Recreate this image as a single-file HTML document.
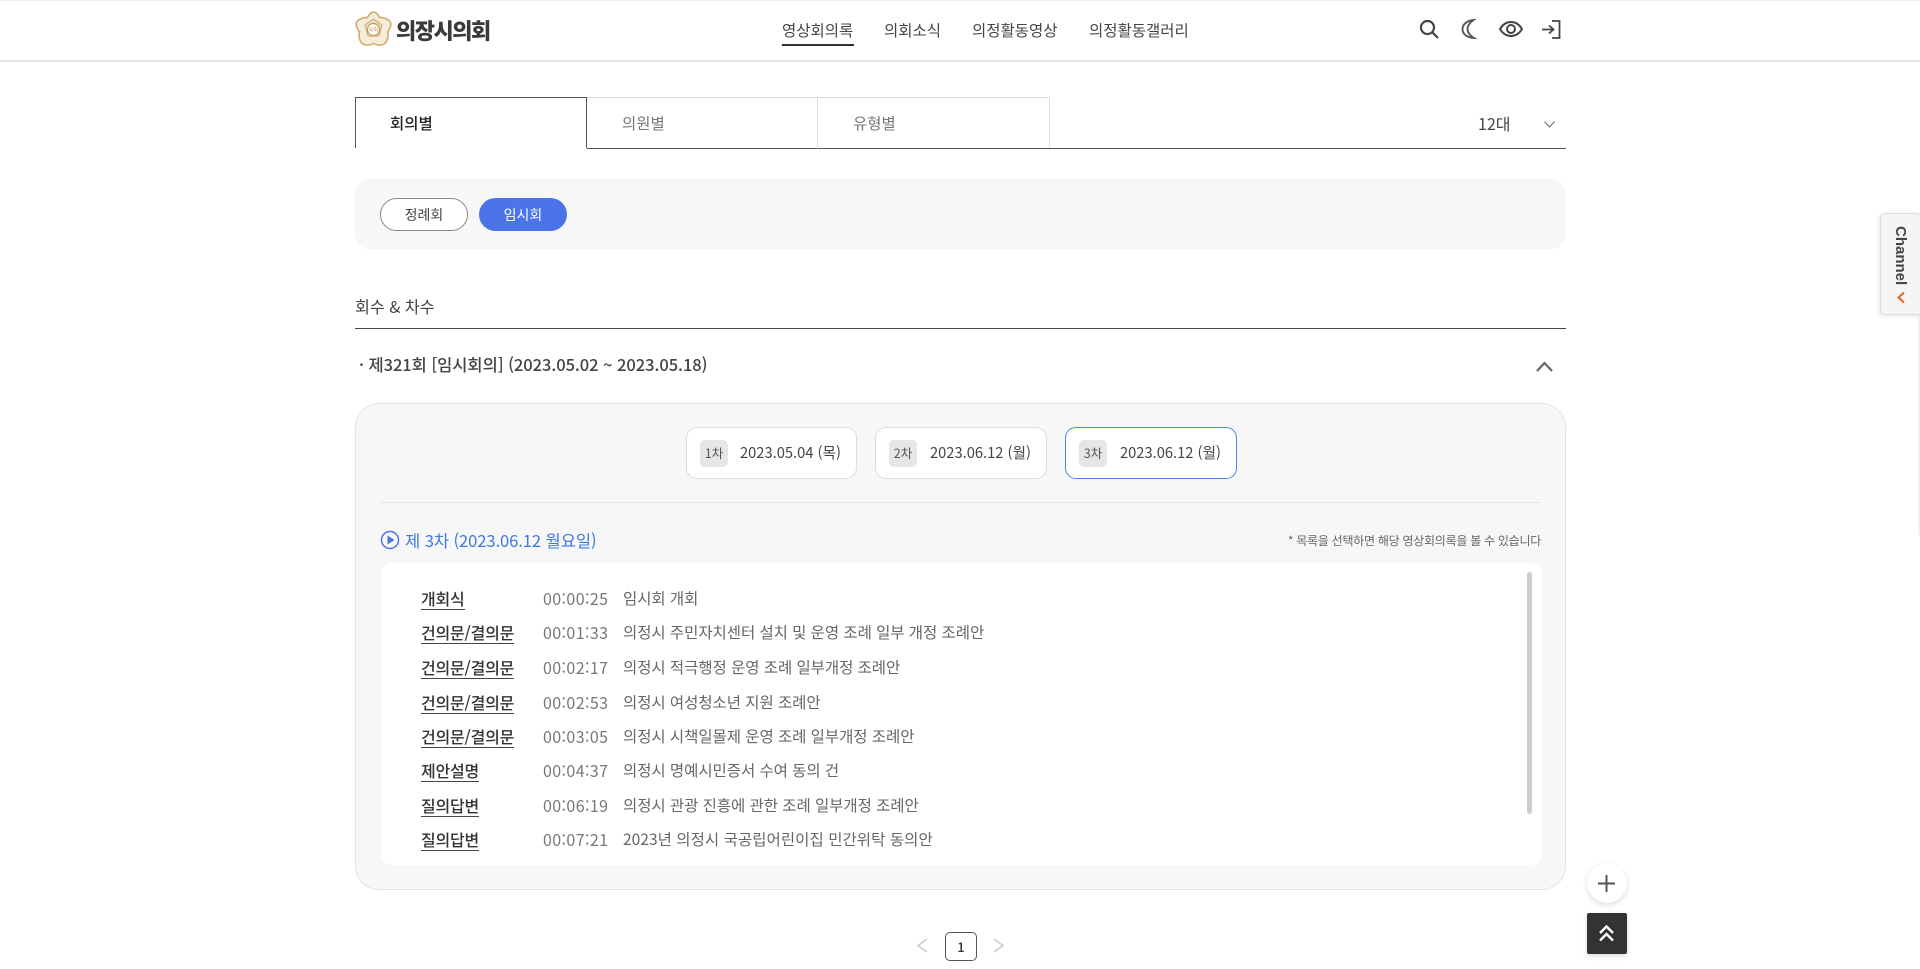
<!DOCTYPE html>
<html lang="ko"><head><meta charset="utf-8"><title>의장시의회</title>
<style>
html,body{margin:0;padding:0;background:#fff;width:1920px;height:969px;overflow:hidden}
body{position:relative;font-family:"Noto Sans CJK KR","Liberation Sans",sans-serif;color:#333}
.a{position:absolute;white-space:nowrap;box-sizing:border-box}
.t{line-height:20px;height:20px}
.nav{font-size:15.5px;top:20px;color:#444;letter-spacing:0}
.tab{top:97px;height:52px;border:1px solid #ddd;border-bottom:1px solid #555;border-left:0;background:#fff;font-size:15.5px;line-height:50px;padding-left:35px;color:#777}
.pill{top:198px;width:88px;height:33px;border-radius:17px;text-align:center;font-size:14px;line-height:33px}
.day{top:427px;height:52px;border:1px solid #ddd;border-radius:11px;background:#fff;font-size:14.7px;line-height:49px;color:#444}
.day b{position:absolute;left:13px;top:12px;width:28px;height:27px;background:#e6e6e6;border-radius:5px;font-weight:400;font-size:12.5px;line-height:25px;text-align:center;color:#555}
.day span{position:absolute;left:53px;top:0}
.lb{left:421px;font-size:16px;font-weight:500;color:#333;line-height:20px;height:22px;border-bottom:1px solid #444;letter-spacing:-.2px}
.tm{left:543px;font-size:16px;color:#777;line-height:20px;letter-spacing:.4px}
.tx{left:623px;font-size:15.5px;color:#666;line-height:20px;letter-spacing:-.05px}
svg{position:absolute;overflow:visible}
</style></head><body>
<div class="a" style="left:0;top:0;width:1920px;height:1px;background:#eee"></div>
<div class="a" style="left:0;top:60px;width:1920px;height:2px;background:#e2e2e2"></div>

<svg style="left:355px;top:11px" width="37" height="37" viewBox="0 0 37 37">
<path d="M18.500 1C21 1 23.500 4 24.500 6.500C27.500 6 34 8 35.500 11.500C37 15 34 19 32.500 21C34 24 32.500 31 29 33C26 35 21 34 18.500 32.500C16 34 11 35 8 33C4.500 31 3 24 4.500 21C3 19 0 15 1.500 11.500C3 8 9.500 6 12.500 6.500C13.500 4 16 1 18.500 1Z" fill="#f5ecdb" stroke="#d3ab6d" stroke-width="1.600"/>
<path d="M18.500 8L27 14L24 25L13 25L10 14Z" fill="#ecdcbc" stroke="#cfa768" stroke-width="1"/>
<circle cx="18.500" cy="18.500" r="6" fill="#fff" stroke="#c49a5b" stroke-width="1.200"/>
<text x="18.500" y="20.500" font-size="5" fill="#b58a4b" text-anchor="middle" font-family="Noto Sans CJK KR">의회</text>
</svg>
<div class="a" style="left:396px;top:14px;font-size:22px;font-weight:900;line-height:32px;color:#3a3a3a;letter-spacing:-1.5px">의장시의회</div>

<div class="a t nav" style="left:782px">영상회의록</div>
<div class="a" style="left:782px;top:44px;width:72px;height:2px;background:#333"></div>
<div class="a t nav" style="left:884px">의회소식</div>
<div class="a t nav" style="left:972px">의정활동영상</div>
<div class="a t nav" style="left:1089px">의정활동갤러리</div>

<svg style="left:1419px;top:19px" width="20" height="20" viewBox="0 0 20 20" fill="none" stroke="#444" stroke-width="2.200"><circle cx="8.500" cy="8.500" r="6.500"/><path d="M13.300 13.300L19 19"/></svg>
<svg style="left:1460px;top:19px" width="18" height="20" viewBox="0 0 18 20" fill="none" stroke="#555" stroke-width="1.900"><path d="M13.500 1C7 1.500 2.500 5.500 2.500 10.200C2.500 15 7 18.700 14 19C10 16.500 7.500 13.800 7.500 10C7.500 6.200 10 3.500 13.500 1Z"/></svg>
<svg style="left:1499px;top:20px" width="24" height="18" viewBox="0 0 24 18" fill="none" stroke="#444" stroke-width="2"><path d="M1 9C4 4 8 2 12 2C16 2 20 4 23 9C20 14 16 16 12 16C8 16 4 14 1 9Z"/><circle cx="12" cy="9" r="4"/></svg>
<svg style="left:1541px;top:20px" width="20" height="19" viewBox="0 0 20 19" fill="none" stroke="#444" stroke-width="1.800"><path d="M11 1H18.500V18H11"/><path d="M1 9.500H12M8 5.500L12.500 9.500L8 13.500"/></svg>

<div class="a tab" style="left:355px;width:232px;border:1px solid #555;border-bottom:0;height:51px;color:#222;font-weight:500;z-index:2;padding-left:34px">회의별</div>
<div class="a tab" style="left:587px;width:231px">의원별</div>
<div class="a tab" style="left:818px;width:232px">유형별</div>
<div class="a" style="left:1049px;top:148px;width:517px;height:1px;background:#555"></div>
<div class="a t" style="left:1478px;top:113px;font-size:16px;color:#444">12대</div>
<svg style="left:1544px;top:121px" width="11" height="7" viewBox="0 0 11 7" fill="none" stroke="#777" stroke-width="1.200"><path d="M.500 .500L5.500 6L10.500 .500"/></svg>

<div class="a" style="left:355px;top:179px;width:1211px;height:70px;background:#f7f7f7;border-radius:15px"></div>
<div class="a pill" style="left:380px;background:#fff;border:1px solid #888;color:#444">정례회</div>
<div class="a pill" style="left:479px;background:#4a74e8;color:#fff;line-height:35px">임시회</div>

<div class="a t" style="left:355px;top:296px;font-size:16.2px;color:#444">회수 &amp; 차수</div>
<div class="a" style="left:355px;top:328px;width:1211px;height:1px;background:#444"></div>
<div class="a t" style="left:359px;top:354px;font-size:16.5px;font-weight:500;color:#444;letter-spacing:-.05px">· 제321회 [임시회의] (2023.05.02 ~ 2023.05.18)</div>
<svg style="left:1536px;top:361px" width="17" height="11" viewBox="0 0 17 11" fill="none" stroke="#666" stroke-width="2.200"><path d="M1 10L8.500 2L16 10"/></svg>

<div class="a" style="left:355px;top:403px;width:1211px;height:487px;background:#f7f7f7;border:1px solid #e4e4e4;border-radius:24px"></div>
<div class="a day" style="left:686px;width:171px"><b>1차</b><span>2023.05.04 (목)</span></div>
<div class="a day" style="left:875px;width:172px"><b>2차</b><span style="left:54px">2023.06.12 (월)</span></div>
<div class="a day" style="left:1065px;width:172px;border-color:#4a86e0"><b>3차</b><span style="left:54px">2023.06.12 (월)</span></div>
<div class="a" style="left:380px;top:502px;width:1161px;height:1px;background:#e6e6e6"></div>

<svg style="left:380px;top:530px" width="20" height="20" viewBox="0 0 20 20"><circle cx="10" cy="10" r="8.500" fill="none" stroke="#4a74e8" stroke-width="1.500"/><path d="M7.500 5.500L14.500 10L7.500 14.500Z" fill="#4a74e8"/></svg>
<div class="a t" style="left:405px;top:530px;font-size:16.6px;color:#3f78e0;letter-spacing:-.1px">제 3차 (2023.06.12 월요일)</div>
<div class="a t" style="right:379px;top:531px;font-size:12px;color:#666;letter-spacing:-.27px">* 목록을 선택하면 해당 영상회의록을 볼 수 있습니다</div>

<div class="a" style="left:381px;top:563px;width:1161px;height:302px;background:#fff;border-radius:11px"></div>
<div class="a" style="left:1527px;top:572px;width:5px;height:242px;background:#ccc;border-radius:3px"></div>

<div class="a lb" style="top:588px">개회식</div><div class="a tm" style="top:588px">00:00:25</div><div class="a tx" style="top:588px">임시회 개회</div>
<div class="a lb" style="top:622px">건의문/결의문</div><div class="a tm" style="top:622px">00:01:33</div><div class="a tx" style="top:622px">의정시 주민자치센터 설치 및 운영 조례 일부 개정 조례안</div>
<div class="a lb" style="top:657px">건의문/결의문</div><div class="a tm" style="top:657px">00:02:17</div><div class="a tx" style="top:657px">의정시 적극행정 운영 조례 일부개정 조례안</div>
<div class="a lb" style="top:692px">건의문/결의문</div><div class="a tm" style="top:692px">00:02:53</div><div class="a tx" style="top:692px">의정시 여성청소년 지원 조례안</div>
<div class="a lb" style="top:726px">건의문/결의문</div><div class="a tm" style="top:726px">00:03:05</div><div class="a tx" style="top:726px">의정시 시책일몰제 운영 조례 일부개정 조례안</div>
<div class="a lb" style="top:760px">제안설명</div><div class="a tm" style="top:760px">00:04:37</div><div class="a tx" style="top:760px">의정시 명예시민증서 수여 동의 건</div>
<div class="a lb" style="top:795px">질의답변</div><div class="a tm" style="top:795px">00:06:19</div><div class="a tx" style="top:795px">의정시 관광 진흥에 관한 조례 일부개정 조례안</div>
<div class="a lb" style="top:829px">질의답변</div><div class="a tm" style="top:829px">00:07:21</div><div class="a tx" style="top:829px;letter-spacing:.05px">2023년 의정시 국공립어린이집 민간위탁 동의안</div>

<svg style="left:916px;top:938px" width="12" height="15" viewBox="0 0 12 15" fill="none" stroke="#ccc" stroke-width="1.500"><path d="M11 1L2 7.500L11 14"/></svg>
<div class="a" style="left:945px;top:932px;width:32px;height:29px;border:1px solid #555;border-radius:5px;text-align:center;font-size:13px;font-weight:500;line-height:27px;color:#333">1</div>
<svg style="left:993px;top:938px" width="12" height="15" viewBox="0 0 12 15" fill="none" stroke="#ccc" stroke-width="1.500"><path d="M1 1L10 7.500L1 14"/></svg>

<div class="a" style="left:1587px;top:863px;width:40px;height:40px;border-radius:50%;background:#fff;box-shadow:0 2px 6px rgba(0,0,0,.14)"></div>
<svg style="left:1598px;top:875px" width="17" height="17" viewBox="0 0 17 17" stroke="#555" stroke-width="2"><path d="M8.500 0V17M0 8.500H17"/></svg>
<div class="a" style="left:1587px;top:913px;width:40px;height:41px;background:#333;border-radius:2px;box-shadow:0 2px 6px rgba(0,0,0,.14)"></div>
<svg style="left:1599px;top:925px" width="15" height="17" viewBox="0 0 15 17" fill="none" stroke="#fff" stroke-width="2.400"><path d="M1 8L7.500 1.500L14 8M1 15.500L7.500 9L14 15.500"/></svg>

<div class="a" style="left:1918px;top:315px;width:2px;height:220px;background:#f2f2f2"></div>
<div class="a" style="left:1880px;top:213px;width:42px;height:102px;background:#f5f5f5;border:1px solid #ddd;border-radius:5px;box-shadow:-1px 1px 4px rgba(0,0,0,.1)"></div>
<div class="a" style="left:1890px;top:226px;font-family:'Liberation Sans',sans-serif;font-size:15px;font-weight:700;color:#444;writing-mode:vertical-rl;line-height:20px;height:62px">Channel</div>
<svg style="left:1896px;top:291px" width="10" height="13" viewBox="0 0 10 13" fill="none" stroke="#d9681a" stroke-width="2"><path d="M8 1.500L2.500 6.500L8 11.500"/></svg>
</body></html>
